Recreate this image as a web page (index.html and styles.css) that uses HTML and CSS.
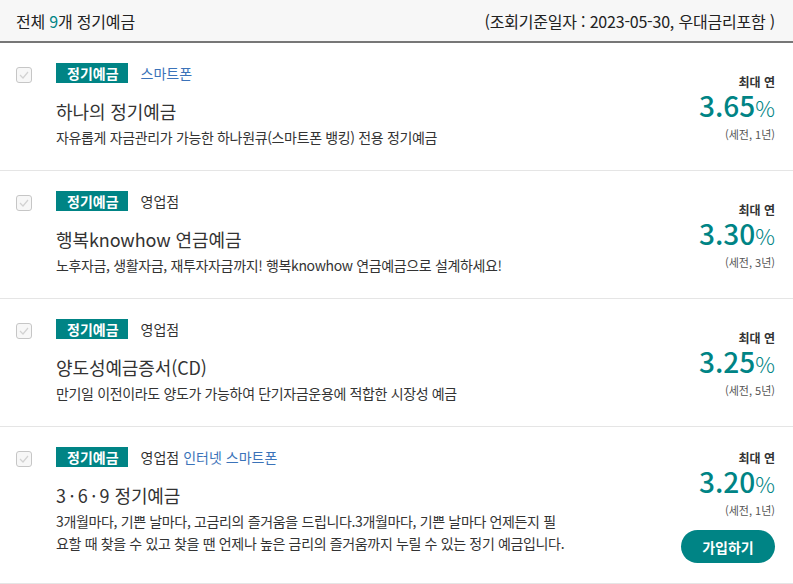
FILE: index.html
```html
<!DOCTYPE html>
<html lang="ko">
<head>
<meta charset="utf-8">
<title>정기예금</title>
<link rel="stylesheet" href="styles.css">
</head>
<body>
<div class="header">
  <div class="count">전체 <em>9</em>개 정기예금</div>
  <div class="date">(조회기준일자 : 2023-05-30, 우대금리포함 )</div>
</div>
<ul class="list">
  <li class="item">
    <span class="check"><svg width="16" height="16" viewBox="0 0 16 16"><rect x="0.5" y="0.5" width="15" height="15" rx="2.5" fill="#f7f7f7" stroke="#c6c6c6"/><polyline points="4,8 7,11 12,5" fill="none" stroke="#d2d2d2" stroke-width="1.2"/></svg></span>
    <div class="info">
      <div class="meta"><span class="tag">정기예금</span><span class="ch blue">스마트폰</span></div>
      <h3 class="title">하나의 정기예금</h3>
      <p class="desc">자유롭게 자금관리가 가능한 하나원큐(스마트폰 뱅킹) 전용 정기예금</p>
    </div>
    <div class="rate">
      <div class="rate-label">최대 연</div>
      <div class="rate-num">3.65<span class="pct">%</span></div>
      <div class="rate-sub">(세전, 1년)</div>
    </div>
  </li>
  <li class="item">
    <span class="check"><svg width="16" height="16" viewBox="0 0 16 16"><rect x="0.5" y="0.5" width="15" height="15" rx="2.5" fill="#f7f7f7" stroke="#c6c6c6"/><polyline points="4,8 7,11 12,5" fill="none" stroke="#d2d2d2" stroke-width="1.2"/></svg></span>
    <div class="info">
      <div class="meta"><span class="tag">정기예금</span><span class="ch">영업점</span></div>
      <h3 class="title">행복knowhow 연금예금</h3>
      <p class="desc">노후자금, 생활자금, 재투자자금까지! 행복knowhow 연금예금으로 설계하세요!</p>
    </div>
    <div class="rate">
      <div class="rate-label">최대 연</div>
      <div class="rate-num">3.30<span class="pct">%</span></div>
      <div class="rate-sub">(세전, 3년)</div>
    </div>
  </li>
  <li class="item">
    <span class="check"><svg width="16" height="16" viewBox="0 0 16 16"><rect x="0.5" y="0.5" width="15" height="15" rx="2.5" fill="#f7f7f7" stroke="#c6c6c6"/><polyline points="4,8 7,11 12,5" fill="none" stroke="#d2d2d2" stroke-width="1.2"/></svg></span>
    <div class="info">
      <div class="meta"><span class="tag">정기예금</span><span class="ch">영업점</span></div>
      <h3 class="title">양도성예금증서(CD)</h3>
      <p class="desc">만기일 이전이라도 양도가 가능하여 단기자금운용에 적합한 시장성 예금</p>
    </div>
    <div class="rate">
      <div class="rate-label">최대 연</div>
      <div class="rate-num">3.25<span class="pct">%</span></div>
      <div class="rate-sub">(세전, 5년)</div>
    </div>
  </li>
  <li class="item">
    <span class="check"><svg width="16" height="16" viewBox="0 0 16 16"><rect x="0.5" y="0.5" width="15" height="15" rx="2.5" fill="#f7f7f7" stroke="#c6c6c6"/><polyline points="4,8 7,11 12,5" fill="none" stroke="#d2d2d2" stroke-width="1.2"/></svg></span>
    <div class="info">
      <div class="meta"><span class="tag">정기예금</span><span class="ch">영업점</span><span class="ch blue">인터넷</span><span class="ch blue">스마트폰</span></div>
      <h3 class="title">3&#8201;·&#8201;6&#8201;·&#8201;9 정기예금</h3>
      <p class="desc">3개월마다, 기쁜 날마다, 고금리의 즐거움을 드립니다.3개월마다, 기쁜 날마다 언제든지 필요할 때 찾을 수 있고 찾을 땐 언제나 높은 금리의 즐거움까지 누릴 수 있는 정기 예금입니다.</p>
    </div>
    <div class="rate">
      <div class="rate-label">최대 연</div>
      <div class="rate-num">3.20<span class="pct">%</span></div>
      <div class="rate-sub">(세전, 1년)</div>
      <button class="join" type="button">가입하기</button>
    </div>
  </li>
</ul>
</body>
</html>
```

FILE: styles.css
```css
body {
  margin: 0;
  font-family: "Noto Sans CJK KR", "Noto Sans", sans-serif;
  color: #333;
  background: #fff;
}

.header {
  display: flex;
  justify-content: space-between;
  align-items: center;
  height: 41px;
  padding: 0 18px 0 16px;
  background: #f7f7f7;
  border-bottom: 2px solid #777;
  font-size: 16px;
  color: #222;
  letter-spacing: -0.2px;
}

.count em {
  font-style: normal;
  color: #008485;
}

.list {
  list-style: none;
  margin: 0;
  padding: 0;
}

.item {
  display: flex;
  align-items: flex-start;
  padding: 20px 18px 20px 16px;
  border-bottom: 1px solid #e5e5e5;
}

.check {
  display: block;
  width: 16px;
  height: 16px;
  margin-top: 4px;
  margin-right: 24px;
  flex: none;
}

.check svg {
  display: block;
}

.info {
  flex: 1;
  margin-bottom: 2px;
}

.meta {
  display: flex;
  align-items: center;
  height: 20px;
  font-size: 14px;
}

.tag {
  display: block;
  height: 20px;
  line-height: 20px;
  padding: 0 9px 0 11px;
  background: #008485;
  color: #fff;
  font-weight: 700;
  margin-right: 9px;
}

.ch {
  margin-left: 4px;
  color: #333;
}

.ch.blue {
  color: #3b73b9;
}

.title {
  margin: 16px 0 0;
  font-size: 18px;
  font-weight: 400;
  line-height: 24px;
  letter-spacing: -0.1px;
  color: #333;
}

.desc {
  margin: 3px 0 0;
  max-width: 510px;
  font-size: 14px;
  line-height: 22px;
  letter-spacing: -0.35px;
  word-break: break-all;
  color: #333;
}

.rate {
  align-self: center;
  display: flex;
  flex-direction: column;
  align-items: flex-end;
  padding-top: 2px;
  text-align: right;
}

.rate-label {
  font-size: 12px;
  line-height: 17px;
  font-weight: 700;
  color: #333;
}

.rate-num {
  font-size: 28px;
  line-height: 30px;
  font-weight: 500;
  color: #008485;
}

.pct {
  font-size: 22px;
  font-weight: 300;
}

.rate-sub {
  margin-top: 3px;
  font-size: 11px;
  line-height: 18px;
  color: #555;
}

.join {
  margin-top: 11px;
  width: 94px;
  height: 33px;
  border: 0;
  border-radius: 17px;
  background: #008485;
  color: #fff;
  font-family: inherit;
  font-size: 14px;
  font-weight: 700;
  cursor: pointer;
}
```
